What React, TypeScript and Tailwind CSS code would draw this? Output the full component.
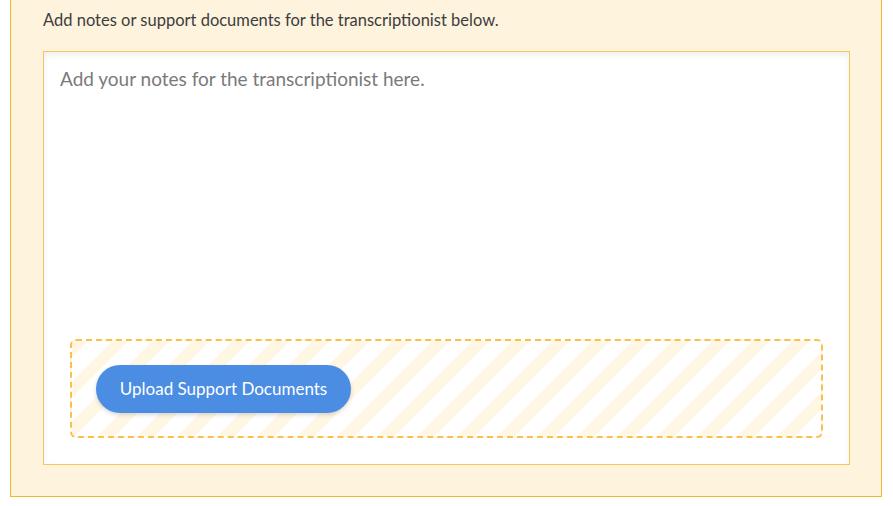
import React from "react";

const font = { fontFamily: "Lato, 'Open Sans', sans-serif" };

export default function App() {
    return (
        <div className="w-[893px] h-[506px] bg-white overflow-hidden" style={font}>
            {/* Notes panel, its top edge sits above the viewport */}
            <div className="ml-[10px] w-[872px] h-[497px] bg-[#fef3dd] border-x border-b border-[#f5b42a] flex flex-col">
                <p className="pl-[32px] pt-[10px] text-[16.5px] leading-[20px] text-[#3d3d3d]">
                    Add notes or support documents for the transcriptionist below.
                </p>

                <div className="ml-[32px] mt-[21px] w-[807px] h-[414px] bg-white border border-[#f5c65c] shadow-[inset_0_3px_6px_rgba(0,0,0,0.07)] flex flex-col">
                    <textarea
                        className="flex-1 resize-none bg-transparent outline-none px-[16px] pt-[15px] text-[19px] leading-[24px] text-[#555] placeholder:text-[#7a7a7a]"
                        placeholder="Add your notes for the transcriptionist here."
                        style={font}
                    />

                    {/* Drop zone */}
                    <div className="mx-[26px] mb-[26px] h-[99px] rounded-[6px] border-2 border-dashed border-[#f9c04a] bg-[repeating-linear-gradient(135deg,#fff6e4_0px,#fff6e4_12px,#ffffff_12px,#ffffff_28.3px)] flex items-center px-[24px]">
                        <button className="w-[255px] h-[48px] rounded-full bg-[#4a8de3] text-white text-[17px] shadow-[0_2px_4px_rgba(0,0,0,0.15)]">
                            Upload Support Documents
                        </button>
                    </div>
                </div>
            </div>
        </div>
    );
}
